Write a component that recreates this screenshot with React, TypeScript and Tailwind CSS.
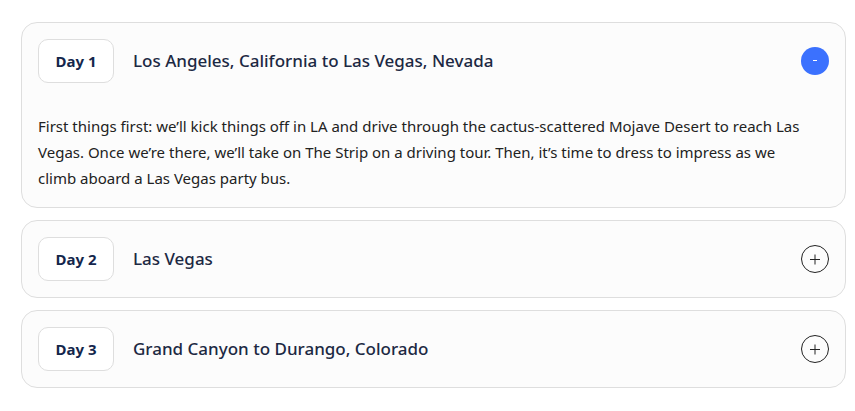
import { useState } from "react";

const days = [
  {
    title: "Los Angeles, California to Las Vegas, Nevada",
    text: "First things first: we’ll kick things off in LA and drive through the cactus-scattered Mojave Desert to reach Las Vegas. Once we’re there, we’ll take on The Strip on a driving tour. Then, it’s time to dress to impress as we climb aboard a Las Vegas party bus.",
  },
  { title: "Las Vegas", text: "" },
  { title: "Grand Canyon to Durango, Colorado", text: "" },
];

export default function App() {
  const [open, setOpen] = useState<number | null>(0);

  return (
    <main className="flex flex-col gap-3 pt-[22px] pr-[9px] pb-6 pl-[21px] font-['Noto_Sans',sans-serif]">
      {days.map((day, i) => {
        const isOpen = open === i;
        return (
          <section key={day.title} className="rounded-2xl border border-[#dedede] bg-[#fcfcfc] p-4">
            <button
              type="button"
              aria-expanded={isOpen}
              onClick={() => setOpen(isOpen ? null : i)}
              className="flex w-full items-center text-left"
            >
              <span className="flex h-11 w-19 shrink-0 items-center justify-center rounded-[10px] border border-[#dedede] bg-white text-[15px] font-bold text-[#14264c]">
                Day {i + 1}
              </span>
              <span className="ml-[19px] flex-1 text-[17px] font-medium text-[#1c2943]">{day.title}</span>
              {isOpen ? (
                <span className="flex size-7 items-center justify-center rounded-full bg-[#3b71fe] text-white">
                  <svg viewBox="0 0 28 28" className="size-7" aria-hidden="true">
                    <path d="M12 13.5h4" stroke="currentColor" />
                  </svg>
                </span>
              ) : (
                <span className="flex size-7 items-center justify-center text-[#222222]">
                  <svg viewBox="0 0 28 28" fill="none" stroke="currentColor" className="size-7" aria-hidden="true">
                    <circle cx="14" cy="14" r="13.5" />
                    <path d="M9 14.5h10M14 9.5v10" />
                  </svg>
                </span>
              )}
            </button>
            {isOpen && day.text && (
              <p className="mt-[30px] pr-4 text-[15px] leading-[26px] text-[#222222]">{day.text}</p>
            )}
          </section>
        );
      })}
    </main>
  );
}
